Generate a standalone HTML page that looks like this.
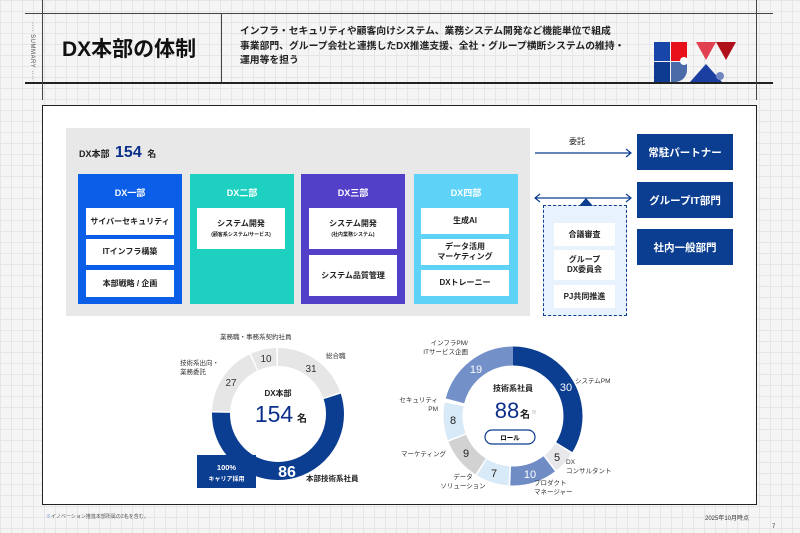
<!DOCTYPE html>
<html><head><meta charset="utf-8"><style>
*{margin:0;padding:0;box-sizing:border-box}
body{width:800px;height:533px;overflow:hidden;position:relative;font-family:"Liberation Sans","Noto Sans CJK JP",sans-serif;color:#222;
background-color:#f5f5f5;background-image:linear-gradient(#e6e6e6 1px,transparent 1px),linear-gradient(90deg,#e6e6e6 1px,transparent 1px);background-size:11px 11px}
.a{position:absolute}
.hl{position:absolute;height:1px;background:#444}
.vl{position:absolute;width:1px;background:#444}
.dept{position:absolute;top:174px;width:104px;height:130px;color:#fff;font-size:9px;font-weight:bold;text-align:center;padding-top:12px}
.wb{position:absolute;background:#fff;color:#222;font-size:8px;font-weight:bold;display:flex;align-items:center;justify-content:center;text-align:center;line-height:1.25}
.nb{position:absolute;left:637px;width:96px;height:36px;background:#0b3d91;color:#fff;font-size:10.5px;font-weight:bold;display:flex;align-items:center;justify-content:center}
.lb{position:absolute;font-size:6.5px;color:#333;line-height:1.35;white-space:nowrap}
</style></head><body>
<div class="hl" style="left:25px;top:13px;width:748px"></div>
<div class="hl" style="left:25px;top:82px;width:748px;height:1.5px;background:#222"></div>
<div class="vl" style="left:42px;top:0;height:100px"></div>
<div class="vl" style="left:756px;top:0;height:100px"></div>
<div class="vl" style="left:221px;top:13px;height:69px"></div>
<div class="a" style="left:29px;top:22px;font-size:6px;color:#555;writing-mode:vertical-rl;letter-spacing:.5px">···· SUMMARY ····</div>
<div class="a" style="left:62px;top:33px;font-size:21px;font-weight:bold;color:#111">DX本部の体制</div>
<div class="a" style="left:240px;top:25px;font-size:9.8px;font-weight:bold;line-height:14.5px;color:#222">インフラ・セキュリティや顧客向けシステム、業務システム開発など機能単位で組成<br>事業部門、グループ会社と連携したDX推進支援、全社・グループ横断システムの維持・<br>運用等を担う</div>
<svg class="a" style="left:654px;top:42px" width="84" height="40" viewBox="0 0 84 40">
<rect x="0" y="0" width="16" height="19" fill="#1846a8"/><rect x="0" y="20" width="16" height="20" fill="#0e3b8f"/>
<rect x="17" y="0" width="16" height="19" fill="#e8111b"/><path d="M17 20h16v8a12 12 0 0 1-12 12h-4z" fill="#4a6aa8"/>
<circle cx="30" cy="19" r="4" fill="#fff"/>
<path d="M42 0h20l-10 18z" fill="#e04050"/><path d="M62 0h20l-10 18z" fill="#b0101a"/>
<path d="M52 22l16 18h-32z" fill="#1a3fa0"/><circle cx="66" cy="34" r="4" fill="#6f86c0"/>
</svg>
<div class="a" style="left:42px;top:105px;width:715px;height:400px;background:#fff;border:1.5px solid #222"></div>
<div class="a" style="left:66px;top:128px;width:464px;height:188px;background:#e9e8e8"></div>
<div class="a" style="left:79px;top:144px;font-size:9px;font-weight:bold">DX本部 <span style="font-size:16px;color:#0b2f8a;margin:0 3px">154</span> 名</div>
<div class="dept" style="left:78px;background:#0a5ee8">DX一部</div>
<div class="dept" style="left:190px;background:#1dd0c0">DX二部</div>
<div class="dept" style="left:301px;background:#5240c9">DX三部</div>
<div class="dept" style="left:414px;background:#5ed3f7">DX四部</div>
<div class="wb" style="left:86px;top:208px;width:88px;height:27px"><div>サイバーセキュリティ</div></div>
<div class="wb" style="left:86px;top:239px;width:88px;height:26px"><div>ITインフラ構築</div></div>
<div class="wb" style="left:86px;top:270px;width:88px;height:27px"><div>本部戦略 / 企画</div></div>
<div class="wb" style="left:197px;top:208px;width:88px;height:41px"><div>システム開発<br><span style="font-size:5px">(顧客系システム/サービス)</span></div></div>
<div class="wb" style="left:309px;top:208px;width:88px;height:41px"><div>システム開発<br><span style="font-size:5px">(社内業務システム)</span></div></div>
<div class="wb" style="left:309px;top:255px;width:88px;height:41px"><div>システム品質管理</div></div>
<div class="wb" style="left:421px;top:208px;width:88px;height:26px"><div>生成AI</div></div>
<div class="wb" style="left:421px;top:239px;width:88px;height:26px"><div>データ活用<br>マーケティング</div></div>
<div class="wb" style="left:421px;top:270px;width:88px;height:26px"><div>DXトレーニー</div></div>
<div class="a" style="left:569px;top:136px;font-size:8px">委託</div>
<svg class="a" style="left:530px;top:140px" width="106" height="70">
<path d="M5 13h96M96 9l5 4-5 4" stroke="#0b3d91" stroke-width="1.2" fill="none"/>
<path d="M5 58h96M96 54l5 4-5 4M10 54l-5 4 5 4" stroke="#0b3d91" stroke-width="1.2" fill="none"/>
</svg>
<div class="nb" style="top:134px">常駐パートナー</div>
<div class="nb" style="top:182px">グループIT部門</div>
<div class="nb" style="top:229px">社内一般部門</div>
<div class="a" style="left:543px;top:205px;width:84px;height:111px;background:#e8f2fc;border:1.5px dashed #0b3d91"></div>
<svg class="a" style="left:579px;top:198px" width="14" height="8"><path d="M0 8L7 0L14 8z" fill="#0b3d91"/></svg>
<div class="wb" style="left:554px;top:223px;width:61px;height:23px"><div>合議審査</div></div>
<div class="wb" style="left:554px;top:250px;width:61px;height:30px"><div>グループ<br>DX委員会</div></div>
<div class="wb" style="left:554px;top:285px;width:61px;height:23px"><div>PJ共同推進</div></div>
<svg class="a" style="left:0;top:0" width="800" height="533">
<g transform="rotate(-90 278 414)" fill="none" stroke-width="18">
<circle cx="278" cy="414" r="57" pathLength="360" stroke="#e6e6e6" stroke-dasharray="70.5 400" stroke-dashoffset="0"/>
<circle cx="278" cy="414" r="57" pathLength="360" stroke="#0b3d91" stroke-dasharray="199.5 400" stroke-dashoffset="-72"/>
<circle cx="278" cy="414" r="57" pathLength="360" stroke="#e6e6e6" stroke-dasharray="61.5 400" stroke-dashoffset="-273"/>
<circle cx="278" cy="414" r="57" pathLength="360" stroke="#e6e6e6" stroke-dasharray="22.5 400" stroke-dashoffset="-336"/>
</g>
<g transform="rotate(-90 513 416)" fill="none" stroke-width="19">
<circle cx="513" cy="416" r="60" pathLength="360" stroke="#0b3d91" stroke-dasharray="121.5 400" stroke-dashoffset="0"/>
<circle cx="513" cy="416" r="60" pathLength="360" stroke="#e8e8ec" stroke-dasharray="18.5 400" stroke-dashoffset="-123"/>
<circle cx="513" cy="416" r="60" pathLength="360" stroke="#6f8cc4" stroke-dasharray="39.5 400" stroke-dashoffset="-143"/>
<circle cx="513" cy="416" r="60" pathLength="360" stroke="#d8e9f7" stroke-dasharray="27.5 400" stroke-dashoffset="-184"/>
<circle cx="513" cy="416" r="60" pathLength="360" stroke="#d2d2d2" stroke-dasharray="35.5 400" stroke-dashoffset="-213"/>
<circle cx="513" cy="416" r="60" pathLength="360" stroke="#d8e9f7" stroke-dasharray="31.5 400" stroke-dashoffset="-250"/>
<circle cx="513" cy="416" r="60" pathLength="360" stroke="#7390c8" stroke-dasharray="75.5 400" stroke-dashoffset="-285"/>
</g>
<path d="M197 455h59v5l6 4-6 4v20h-59z" fill="#0b3d91"/>
<g font-family="Liberation Sans,Noto Sans CJK JP,sans-serif" font-size="10" text-anchor="middle">
<text x="311" y="372" fill="#333">31</text><text x="266" y="362" fill="#333">10</text><text x="231" y="386" fill="#333">27</text>
<text x="287" y="477" fill="#fff" font-size="16" font-weight="bold">86</text>
<text x="278" y="396" font-size="8" font-weight="bold" fill="#222">DX本部</text>
<text x="274" y="422" font-size="23" fill="#0b2f8a">154</text><text x="302" y="422" font-size="10" font-weight="bold" fill="#222">名</text>
<text x="566" y="391" fill="#fff" font-size="11">30</text><text x="557" y="461" fill="#222" font-size="11">5</text>
<text x="530" y="478" fill="#fff" font-size="11">10</text><text x="494" y="477" fill="#222" font-size="11">7</text>
<text x="466" y="457" fill="#222" font-size="11">9</text><text x="453" y="424" fill="#222" font-size="11">8</text>
<text x="476" y="373" fill="#fff" font-size="11">19</text>
<text x="513" y="391" font-size="8" font-weight="bold" fill="#222">技術系社員</text>
<text x="507" y="418" font-size="22" fill="#0b2f8a">88</text><text x="525" y="418" font-size="10" font-weight="bold" fill="#222">名</text><text x="534" y="414" font-size="5" fill="#888">※</text>
</g>
<rect x="485" y="430" width="50" height="14" rx="7" fill="#fff" stroke="#0b3d91" stroke-width="1.2"/>
<text x="510" y="440" font-size="6.5" font-weight="bold" text-anchor="middle" font-family="Liberation Sans,Noto Sans CJK JP,sans-serif">ロール</text>
</svg>
<div class="a" style="left:197px;top:462px;width:59px;text-align:center;color:#fff;font-size:7.5px;font-weight:bold;line-height:11px">100%<br><span style="font-size:6px">キャリア採用</span></div>
<div class="lb" style="left:220px;top:334px">業務職・事務系契約社員</div>
<div class="lb" style="left:326px;top:353px">総合職</div>
<div class="lb" style="left:180px;top:360px">技術系出向・<br>業務委託</div>
<div class="lb" style="left:306px;top:474px;font-size:7.5px;font-weight:bold;color:#222">本部技術系社員</div>
<div class="lb" style="left:418px;top:340px;text-align:right;width:50px">インフラPM/<br>ITサービス企画</div>
<div class="lb" style="left:575px;top:378px">システムPM</div>
<div class="lb" style="left:390px;top:397px;text-align:right;width:48px">セキュリティ<br>PM</div>
<div class="lb" style="left:401px;top:451px">マーケティング</div>
<div class="lb" style="left:566px;top:459px">DX<br>コンサルタント</div>
<div class="lb" style="left:438px;top:474px;text-align:center;width:50px">データ<br>ソリューション</div>
<div class="lb" style="left:534px;top:480px">プロダクト<br>マネージャー</div>
<div class="a" style="left:46px;top:513px;font-size:5px;color:#555"><span style="color:#5a7fc0">※</span>イノベーション推進本部所属の2名を含む。</div>
<div class="a" style="left:705px;top:513px;font-size:6px;color:#333">2025年10月時点</div>
<div class="a" style="left:772px;top:524px;font-size:6px;color:#333">7</div>
</body></html>
